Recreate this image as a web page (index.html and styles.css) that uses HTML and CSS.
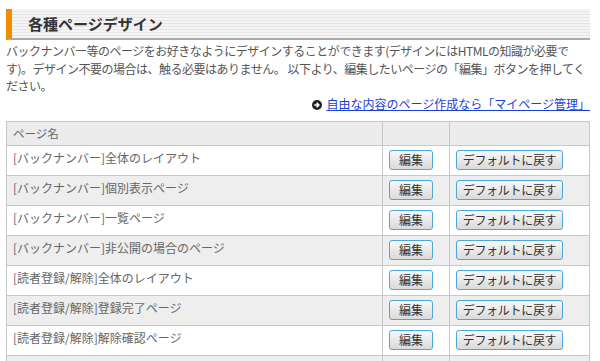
FILE: index.html
```html
<!DOCTYPE html>
<html lang="ja">
<head>
  <meta charset="UTF-8" />
  <title>各種ページデザイン</title>
  <link rel="stylesheet" href="styles.css">
</head>
<body>
  <div id="page">
    <h2 class="section-title">各種ページデザイン</h2>
    <p class="intro">バックナンバー等のページをお好きなようにデザインすることができます(デザインにはHTMLの知識が必要です)。デザイン不要の場合は、触る必要はありません。 以下より、編集したいページの「編集」ボタンを押してください。</p>
    <div class="more-link">
      <svg class="arrow-icon" width="10" height="10" viewBox="0 0 10 10"><circle cx="5" cy="5" r="5" fill="#222"/><path d="M2.3 5h4.2M4.6 2.8 6.8 5 4.6 7.2" stroke="#fff" stroke-width="1.6" fill="none"/></svg>
      <a href="#">自由な内容のページ作成なら「マイページ管理」</a>
    </div>

    <!-- ページ一覧 -->
    <table class="page-list">
      <tr class="head">
        <th>ページ名</th>
        <th class="col-edit"></th>
        <th class="col-reset"></th>
      </tr>
      <tr>
        <td>[バックナンバー]全体のレイアウト</td>
        <td><button class="btn btn-edit">編集</button></td>
        <td><button class="btn btn-reset">デフォルトに戻す</button></td>
      </tr>
      <tr class="alt">
        <td>[バックナンバー]個別表示ページ</td>
        <td><button class="btn btn-edit">編集</button></td>
        <td><button class="btn btn-reset">デフォルトに戻す</button></td>
      </tr>
      <tr>
        <td>[バックナンバー]一覧ページ</td>
        <td><button class="btn btn-edit">編集</button></td>
        <td><button class="btn btn-reset">デフォルトに戻す</button></td>
      </tr>
      <tr class="alt">
        <td>[バックナンバー]非公開の場合のページ</td>
        <td><button class="btn btn-edit">編集</button></td>
        <td><button class="btn btn-reset">デフォルトに戻す</button></td>
      </tr>
      <tr>
        <td>[読者登録/解除]全体のレイアウト</td>
        <td><button class="btn btn-edit">編集</button></td>
        <td><button class="btn btn-reset">デフォルトに戻す</button></td>
      </tr>
      <tr class="alt">
        <td>[読者登録/解除]登録完了ページ</td>
        <td><button class="btn btn-edit">編集</button></td>
        <td><button class="btn btn-reset">デフォルトに戻す</button></td>
      </tr>
      <tr>
        <td>[読者登録/解除]解除確認ページ</td>
        <td><button class="btn btn-edit">編集</button></td>
        <td><button class="btn btn-reset">デフォルトに戻す</button></td>
      </tr>
      <tr class="alt last">
        <td></td>
        <td></td>
        <td></td>
      </tr>
    </table>
  </div>
</body>
</html>
```

FILE: styles.css
```css
body {
  margin: 0;
  padding: 0;
  background: #fff;
  font-family: "Noto Sans CJK JP", "Noto Sans", sans-serif;
  font-size: 12px;
  color: #555;
  overflow: hidden;
}
#page {
  padding: 9px 10px 0 6px;
}
.section-title {
  margin: 0;
  height: 29px;
  line-height: 29px;
  padding-left: 16px;
  font-size: 15px;
  font-weight: bold;
  color: #333;
  border-left: 6px solid #f08c00;
  border-bottom: 2px solid #aaa;
  background: repeating-linear-gradient(to bottom, #f4f4f4 0, #f4f4f4 2px, #e6e6e6 2px, #e6e6e6 3px);
}
.intro {
  margin: 2px 0 0;
  line-height: 17.5px;
  letter-spacing: -0.5px;
}
.more-link {
  text-align: right;
  line-height: 17px;
}
.arrow-icon {
  vertical-align: -1px;
  margin-right: 2px;
}
.more-link a {
  color: #1a3fd6;
  text-decoration: underline;
}
.page-list {
  width: 100%;
  margin-top: 9px;
  border-collapse: collapse;
  border: 1px solid #c8c8c8;
}
.page-list th,
.page-list td {
  border: 1px solid #c8c8c8;
  text-align: left;
  font-weight: normal;
  color: #666;
  vertical-align: top;
}
.page-list th {
  background: #ececec;
  height: 23px;
  padding: 0 6px;
  vertical-align: middle;
  font-size: 11.5px;
}
.page-list td {
  height: 25px;
  padding: 4px 6px 0;
  line-height: 16px;
}
.page-list tr.alt td {
  background: #eeeeee;
}
.page-list .col-edit {
  width: 54px;
}
.page-list .col-reset {
  width: 127px;
}
.btn {
  height: 20px;
  padding: 0;
  font-family: "Noto Sans CJK JP", sans-serif;
  font-size: 12px;
  color: #333;
  border: 1px solid #4aa8dc;
  border-radius: 3px;
  background: linear-gradient(to bottom, #f8f8f8, #dadada);
  line-height: 17px;
}
.btn-edit {
  width: 44px;
}
.btn-reset {
  width: 107px;
  letter-spacing: -0.3px;
}
```
